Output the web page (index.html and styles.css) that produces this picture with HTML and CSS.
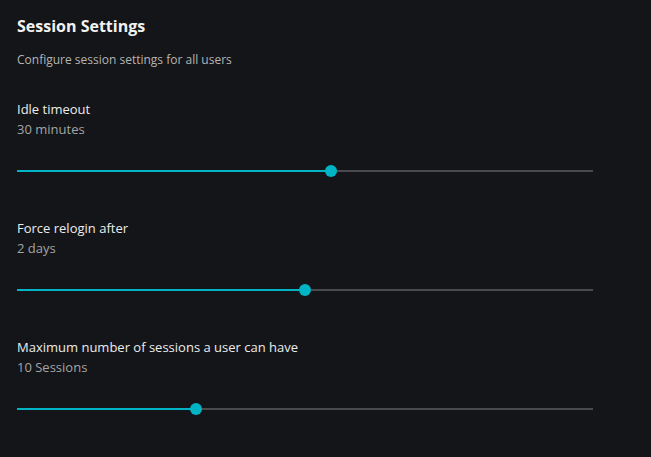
FILE: index.html
```html
<!DOCTYPE html>
<html lang="en">
<head>
    <meta charset="UTF-8">
    <meta name="viewport" content="width=device-width, initial-scale=1.0">
    <title>Session Settings</title>
    <link rel="stylesheet" href="styles.css">
</head>
<body>

<div class="panel">
    <h2 class="title">Session Settings</h2>
    <p class="subtitle">Configure session settings for all users</p>

    <div class="setting">
        <div class="label">Idle timeout</div>
        <div class="value">30 minutes</div>
        <div class="slider">
            <div class="fill" style="width: 54.5%"></div>
            <div class="thumb" style="left: 54.5%"></div>
        </div>
    </div>

    <div class="setting">
        <div class="label">Force relogin after</div>
        <div class="value">2 days</div>
        <div class="slider">
            <div class="fill" style="width: 50%"></div>
            <div class="thumb" style="left: 50%"></div>
        </div>
    </div>

    <div class="setting">
        <div class="label">Maximum number of sessions a user can have</div>
        <div class="value">10 Sessions</div>
        <div class="slider">
            <div class="fill" style="width: 31.1%"></div>
            <div class="thumb" style="left: 31.1%"></div>
        </div>
    </div>
</div>

</body>
</html>
```

FILE: styles.css
```css
html, body {
    margin: 0;
    height: 100%;
    background-color: #141518;
}
body {
    font-family: "Open Sans", "Noto Sans", sans-serif;
    color: #e8e8e8;
}
.panel {
    padding: 16px 17px 0 17px;
    width: 576px;
}
.title {
    margin: 0;
    font-size: 16px;
    line-height: 20px;
    font-weight: 700;
    color: #f2f2f2;
}
.subtitle {
    margin: 16px 0 0 0;
    font-size: 12px;
    line-height: 16px;
    color: #b4b4b4;
}
.setting {
    margin-top: 31px;
}
.setting + .setting {
    margin-top: 37px;
}
.label {
    font-size: 13px;
    line-height: 20px;
    color: #ececec;
}
.value {
    font-size: 13px;
    line-height: 20px;
    color: #a4a4a4;
}
.slider {
    position: relative;
    height: 11px;
    padding-top: 9px;
    margin-top: 22px;
    background: linear-gradient(#4a4a4c, #4a4a4c) no-repeat 0 9px / 100% 2px;
}
.fill {
    height: 2px;
    background-color: #00b4c5;
}
.thumb {
    position: absolute;
    top: 4px;
    width: 12px;
    height: 12px;
    margin-left: -6px;
    border-radius: 50%;
    background-color: #00b4c5;
}
```
